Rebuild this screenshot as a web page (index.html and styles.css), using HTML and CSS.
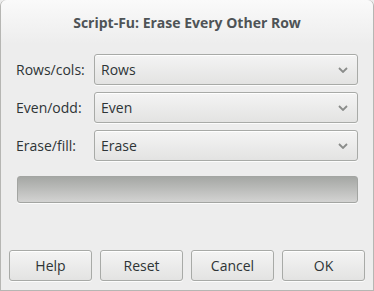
FILE: index.html
```html
<!DOCTYPE html>
<html lang="en">
<head>
    <meta charset="UTF-8">
    <title>Script-Fu: Erase Every Other Row</title>
    <link rel="stylesheet" href="styles.css">
</head>
<body>
    <div class="dialog">
        <!-- Title bar -->
        <div class="titlebar">
            <span class="title">Script-Fu: Erase Every Other Row</span>
        </div>

        <!-- Options -->
        <div class="content">
            <div class="form-grid">
                <label class="field-label">Rows/cols:</label>
                <div class="combo"><span>Rows</span><svg class="chevron" width="10" height="6" viewBox="0 0 10 6"><path d="M1 1 L5 5 L9 1" fill="none" stroke="#8a8c8a" stroke-width="1.8"/></svg></div>

                <label class="field-label">Even/odd:</label>
                <div class="combo"><span>Even</span><svg class="chevron" width="10" height="6" viewBox="0 0 10 6"><path d="M1 1 L5 5 L9 1" fill="none" stroke="#8a8c8a" stroke-width="1.8"/></svg></div>

                <label class="field-label">Erase/fill:</label>
                <div class="combo"><span>Erase</span><svg class="chevron" width="10" height="6" viewBox="0 0 10 6"><path d="M1 1 L5 5 L9 1" fill="none" stroke="#8a8c8a" stroke-width="1.8"/></svg></div>
            </div>

            <div class="progress"></div>
        </div>

        <!-- Buttons -->
        <div class="actions">
            <button class="btn">Help</button>
            <button class="btn">Reset</button>
            <button class="btn">Cancel</button>
            <button class="btn">OK</button>
        </div>
    </div>
</body>
</html>
```

FILE: styles.css
```css
* {
    margin: 0;
    padding: 0;
    box-sizing: border-box;
}

body {
    font-family: 'Open Sans', 'Noto Sans', sans-serif;
    font-size: 14px;
    color: #2e3436;
    background: #ededed;
}

.dialog {
    width: 374px;
    height: 291px;
    display: flex;
    flex-direction: column;
    background: #ededed;
    border: 1px solid #b6b6b3;
    border-top: none;
    border-radius: 6px 6px 0 0;
}

.titlebar {
    height: 44px;
    display: flex;
    align-items: center;
    justify-content: center;
    background: linear-gradient(#fafafa, #ededed);
    border-radius: 6px 6px 0 0;
}

.title {
    font-weight: 700;
    font-size: 14px;
    color: #4e5356;
}

.content {
    padding: 10px 15px 0 15px;
}

.form-grid {
    display: grid;
    grid-template-columns: 78px 1fr;
    row-gap: 7px;
    align-items: center;
}

.field-label {
    padding-bottom: 1px;
}

.combo {
    height: 31px;
    display: flex;
    align-items: center;
    justify-content: space-between;
    padding: 0 9px 0 6px;
    border: 1px solid #a8aaa7;
    border-radius: 3px;
    background: linear-gradient(#f4f4f4, #e3e3e2);
    box-shadow: inset 0 1px #ffffff, 0 1px rgba(255,255,255,0.8);
}

.chevron {
    margin-top: 1px;
}

.progress {
    height: 27px;
    margin: 15px 0 0 1px;
    border: 1px solid #a3a5a2;
    border-radius: 3px;
    background: linear-gradient(#a5a7a4, #d3d3d2);
    box-shadow: 0 1px rgba(255,255,255,0.8);
}

.actions {
    margin-top: auto;
    display: grid;
    grid-template-columns: repeat(4, 1fr);
    gap: 8px;
    padding: 0 8px 9px 8px;
}

.btn {
    height: 31px;
    font-family: inherit;
    font-size: 14px;
    color: #2e3436;
    border: 1px solid #a8aaa7;
    border-radius: 3px;
    background: linear-gradient(#f4f4f4, #e3e3e2);
    box-shadow: inset 0 1px #ffffff, 0 1px rgba(255,255,255,0.8);
}
```
